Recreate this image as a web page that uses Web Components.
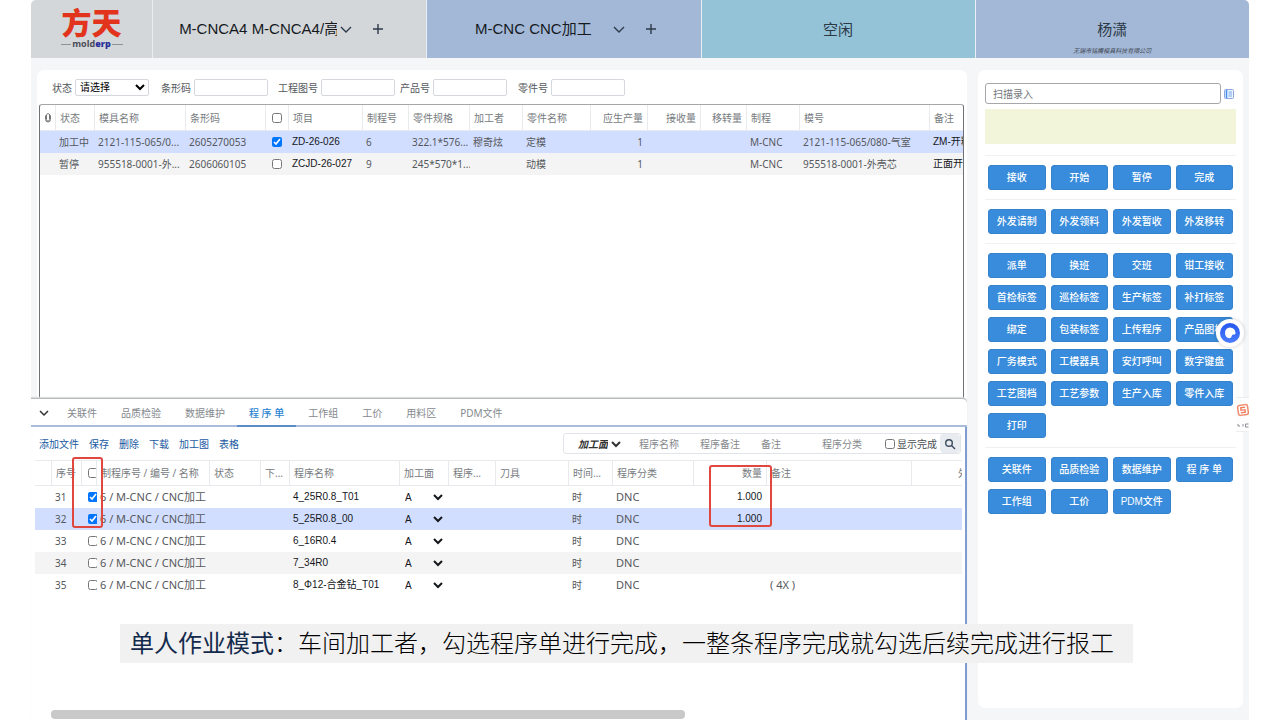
<!DOCTYPE html>
<html lang="zh-CN">
<head>
<meta charset="utf-8">
<meta name="viewport" content="width=device-width, initial-scale=1">
<title>方天 molderp</title>
<style>
  :root {
    --latin: "Noto Sans", "Noto Sans CJK SC", sans-serif;
    --arial: "Liberation Sans", "Noto Sans CJK SC", sans-serif;
    --line: #e8eaed;
    --selected: #d2deff;
    --blue: #388cdb;
  }
  body { margin: 0; background: #fff; font: 10px/14px var(--latin); color: #55585c; }
</style>
</head>
<body>
<mes-app></mes-app>

<script>
const clipIcon = '<svg width="8" height="11" viewBox="0 0 8 11"><path d="M5.5 3v4.5a1.500 1.500 0 0 1-3 0V3a1.500 1.500 0 0 1 2.500-1L6.500 3.500v4a2.500 2.500 0 0 1-5 0V3.500"/></svg>';
const jobs = {
  columns: [
    { title: clipIcon, w: 16, cls: 'clip' }, { title: '状态', w: 39 }, { title: '模具名称', w: 91 }, { title: '条形码', w: 80 },
    { type: 'check', w: 23, cls: 'check' }, { title: '项目', w: 74, cls: 'ink' }, { title: '制程号', w: 46 },
    { title: '零件规格', w: 61, cls: 'clip' }, { title: '加工者', w: 53 }, { title: '零件名称', w: 68 },
    { title: '应生产量', w: 57, cls: 'right' }, { title: '接收量', w: 53, cls: 'right' }, { title: '移转量', w: 46, cls: 'right' },
    { title: '制程', w: 53 }, { title: '模号', w: 130 }, { title: '备注', cls: 'ink clip' }
  ],
  rows: [
    { state: 'selected', cells: ['', '加工中', '2121-115-065/0...', '2605270053', true, 'ZD-26-026', '6', '322.1*576...', '穆奇炫', '定模', '1', '', '', 'M-CNC', '2121-115-065/080-气室', 'ZM-开粗'] },
    { state: 'alt', cells: ['', '暂停', '955518-0001-外...', '2606060105', false, 'ZCJD-26-027', '9', '245*570*1...', '', '动模', '1', '', '', 'M-CNC', '955518-0001-外壳芯', '正面开'] }
  ]
};

const step = (no, picked, file, amount, note, state) => ({
  state, cells: ['', no, picked, '6 / M-CNC / CNC加工', '', '', file, 'A', '', '', '时', 'DNC', amount, note, '']
});
const programs = {
  columns: [
    { title: '', w: 17 }, { title: '序号', w: 30, cls: 'clip' }, { type: 'check', w: 15, cls: 'check' },
    { title: '制程序号 / 编号 / 名称', w: 113, cls: 'clip wide' }, { title: '状态', w: 51 }, { title: '下...', w: 29, cls: 'clip' }, { title: '程序名称', w: 110, cls: 'ink' },
    { title: '加工面', w: 49, type: 'select', cls: 'ink' }, { title: '程序...', w: 47 }, { title: '刀具', w: 73 },
    { title: '时间...', w: 44 }, { title: '程序分类', w: 81, cls: 'wide' }, { title: '数量', w: 73, cls: 'ink right' },
    { title: '备注', w: 145, cls: 'wide' }, { title: '外', cls: 'edge' }
  ],
  rows: [
    step('31', true, '4_25R0.8_T01', '1.000', ''),
    step('32', true, '5_25R0.8_00', '1.000', '', 'selected'),
    step('33', false, '6_16R0.4', '', ''),
    step('34', false, '7_34R0', '', '', 'alt'),
    step('35', false, '8_Φ12-合金钻_T01', '', '( 4X )')
  ]
};
const sources = { jobs, programs };

const define = (name, css, html, setup) => {
  const template = document.createElement('template');
  template.innerHTML = `<style>*{box-sizing:border-box}${css}</style>${html}`;
  customElements.define(name, class extends HTMLElement {
    constructor() {
      super();
      this.attachShadow({ mode: 'open' }).append(template.content.cloneNode(true));
    }
    connectedCallback() {
      if (setup && !this.ready) { this.ready = true; setup(this, this.shadowRoot); }
    }
  });
};

define('brand-logo', `
  :host { display: flex; flex-direction: column; align-items: center; justify-content: center; background: #d3d7da; padding-bottom: 4px; }
  strong { font: 900 30px/34px "Noto Sans CJK SC", sans-serif; color: #e2341d; }
  small { display: flex; align-items: center; gap: 1px; width: 62px; font: 700 9px/12px "Open Sans", sans-serif; color: #4a4a55; }
  small::before, small::after { content: ""; flex: 1; height: 1px; background: #8d9298; }
  b { color: #2a2f9a; }
`, `<strong>方天</strong><small><span>mold<b>erp</b></span></small>`);

define('machine-tab', `
  :host { display: flex; align-items: center; justify-content: center; background: var(--tab, #d3d7da); padding-right: 16px;
          font: 15px/20px var(--arial); color: #15191e; min-width: 0; }
  .name { overflow: hidden; white-space: nowrap; max-width: 158px; }
  button { border: 0; padding: 0; background: none; display: flex; color: #2d3b4a; }
  svg { display: block; fill: none; stroke: currentColor; stroke-width: 1.4; }
  .plus { margin-left: 17px; }
  :host([spaced]) { padding: 0 0 0 4px; }
  :host([spaced]) .menu { margin-left: 18px; }
`, `<span class="name"><slot></slot></span>
  <button class="menu" aria-label="切换机台"><svg width="18" height="16"><path d="M4 6l5 5 5-5"/></svg></button>
  <button class="plus" aria-label="添加机台"><svg width="12" height="12"><path d="M6 1v10M1 6h10"/></svg></button>`);

define('status-tab', `
  :host { position: relative; display: flex; align-items: center; justify-content: center;
          background: var(--tab); font: 15px/20px var(--arial); color: #2b3946; padding-top: 2px; }
  ::slotted(small) { position: absolute; left: 0; right: 0; bottom: 3px; text-align: center;
          font: italic 6px/8px var(--arial); color: #3c4450; }
`, `<slot></slot>`);

define('mes-header', `
  :host { display: grid; grid-template-columns: 121px repeat(4, minmax(0, 1fr)); column-gap: 1px; height: 58px;
          background: #e9eef3; border-radius: 5px 5px 0 0; overflow: hidden; }
  .work { --tab: #a3b8d7; }
  .idle { --tab: #94c3d8; }
`, `<brand-logo></brand-logo>
  <machine-tab>M-CNCA4 M-CNCA4/高速机</machine-tab>
  <machine-tab class="work" spaced>M-CNC CNC加工</machine-tab>
  <status-tab class="idle">空闲</status-tab>
  <status-tab class="work">杨潇<small>无锡市铭腾模具科技有限公司</small></status-tab>`);

define('filter-bar', `
  :host { display: grid; grid-template-columns: 98px 119px 127px 112px 118px; margin: 9px 0 8px 14px; }
  label { display: flex; align-items: center; justify-content: flex-end; gap: 3px; }
  input, select { width: 74px; height: 17px; border: 1px solid #d5d9de; border-radius: 2px; background: #fff;
          font: 10px/14px var(--arial); color: #000; padding: 0 2px; }
  select { padding: 0; }
`, `<label>状态<select><option>请选择</option><option>加工中</option><option>暂停</option></select></label>
  <label>条形码<input></label><label>工程图号<input></label>
  <label>产品号<input></label><label>零件号<input></label>`);

/* Data grid: its source attribute names the set of columns and rows to show. */
define('data-grid', `
  :host { display: block; overflow: hidden; }
  table { width: 100%; table-layout: fixed; border-collapse: separate; border-spacing: 0; }
  th, td { padding: 0 3px; overflow: hidden; white-space: nowrap; text-overflow: ellipsis; text-align: left; }
  th { height: var(--head, 26px); font-weight: 400; padding: 0 4px; color: #777b80; border-right: 1px solid var(--line); border-bottom: 1px solid var(--line); }
  th:last-child { border-right: 0; }
  td { height: 22px; }
  td.wide { font-size: 11px; }
  tr.alt td { background: #f4f4f4; }
  tr.selected td { background: var(--selected); }
  .right { text-align: right; }
  td.right { padding-right: 5px; }
  td.ink, .ink select { font-family: var(--arial); color: #14171b; }
  .clip { text-overflow: clip; padding-right: 0; }
  .check { text-overflow: clip; padding: 0 0 0 6px; }
  .edge { padding-left: 46px; text-overflow: clip; }
  input { width: 10px; height: 10px; margin: 0; display: block; }
  .ink select { font-size: 10px; width: 45px; height: 18px; margin: 0 0 0 -2px; border: 0; background: none; padding: 0; display: block; }
  svg { display: block; fill: none; stroke: #777; }
`, `<table><colgroup></colgroup><thead><tr></tr></thead><tbody></tbody></table>`,
(host, root) => {
  const cell = (value, col) => {
    if (col.type === 'check') return `<input type="checkbox" aria-label="选择" ${value ? 'checked' : ''}>`;
    if (col.type === 'select' && value) return `<select aria-label="加工面"><option>${value}</option></select>`;
    return value ?? '';
  };
  const { columns, rows } = sources[host.getAttribute('source')];
  root.querySelector('colgroup').innerHTML = columns.map(c => `<col${c.w ? ` style="width:${c.w}px"` : ''}>`).join('');
  root.querySelector('thead tr').innerHTML = columns.map(c =>
    `<th class="${c.cls || ''}">${c.type === 'check' ? cell(false, c) : c.title}</th>`).join('');
  root.querySelector('tbody').innerHTML = rows.map(r =>
    `<tr class="${r.state || ''}">${columns.map((c, i) => `<td class="${c.cls || ''}">${cell(r.cells[i], c)}</td>`).join('')}</tr>`).join('');
});

define('job-list', `
  :host { display: flex; flex-direction: column; background: #fff; border-radius: 7px 7px 0 0; min-width: 0; }
  data-grid { flex: 1; margin: 0 3px 0 2px; border: 1px solid #6f7174; border-top-color: #a4a6a8; border-bottom: 0; border-radius: 3px 3px 0 0; }
`, `<filter-bar></filter-bar><data-grid source="jobs"></data-grid>`);

define('panel-tabs', `
  :host { display: flex; height: 28px; border-bottom: 2px solid #a9bcdc; padding-left: 4px; }
  button { border: 0; background: none; padding: 0 12px; margin-bottom: -2px; font: inherit; color: #85898e; white-space: nowrap; }
  button.fold { padding: 0 4px; margin-right: 2px; color: #333; }
  .on { color: #2a84d2; font-weight: 500; border-bottom: 2px solid #5a8cc8; padding: 2px 12px 0; }
  svg { display: block; fill: none; stroke: currentColor; stroke-width: 1.5; }
`, `<button class="fold" aria-label="收起"><svg width="10" height="10"><path d="M1 3l4 4 4-4"/></svg></button>
  <button>关联件</button><button>品质检验</button><button>数据维护</button><button class="on">程 序 单</button>
  <button>工作组</button><button>工价</button><button>用料区</button><button>PDM文件</button>`);

define('program-toolbar', `
  :host { display: flex; align-items: center; justify-content: space-between; height: 33px; padding: 0 4px 0 8px; }
  nav { display: flex; gap: 10px; }
  nav button { border: 0; background: none; padding: 0; font: inherit; color: #19599f; }
  form { display: flex; align-items: center; height: 21px; border: 1px solid #e1e4e8; border-radius: 3px; }
  select { width: 50px; margin: 0 11px 0 10px; border: 0; background: none; font: italic 700 10px/14px var(--latin); color: #333; padding: 0; }
  .text { width: 61px; border: 0; background: none; padding: 0 4px; font: inherit; }
  .text::placeholder { color: #85888d; opacity: 1; }
  label { display: flex; align-items: center; gap: 2px; margin-left: 6px; color: #4b4e52; }
  label input { width: 10px; height: 10px; margin: 0; }
  .find { display: flex; align-items: center; justify-content: center; width: 20px; height: 19px; margin-left: 3px; border: 0; border-radius: 4px; background: #e8ebef; padding: 0; }
  svg { fill: none; stroke: #3c4c5e; stroke-width: 1.4; }
`, `<nav><button>添加文件</button><button>保存</button><button>删除</button><button>下载</button><button>加工图</button><button>表格</button></nav>
  <form><select aria-label="加工面"><option>加工面</option></select>
    <input class="text" placeholder="程序名称" aria-label="程序名称"><input class="text" placeholder="程序备注" aria-label="程序备注">
    <input class="text" placeholder="备注" aria-label="备注"><input class="text" placeholder="程序分类" aria-label="程序分类">
    <label><input type="checkbox">显示完成</label>
    <button class="find" type="button" aria-label="搜索"><svg width="12" height="12"><circle cx="5" cy="5" r="3.300"/><path d="M7.500 7.500l3.500 3.500"/></svg></button></form>`);

define('program-panel', `
  :host { display: flex; flex-direction: column; background: #fff; border-top: 1px solid #b9bbbd; border-radius: 0 5px 0 0;
          box-shadow: 0 -1px 1px #d8dadc; min-width: 0; position: relative; }
  .body { flex: 1; display: flex; flex-direction: column; border-right: 2px solid #7f9dd0; }
  .sheet { position: relative; margin: 0 3px 0 4px; border-top: 1px solid var(--line); --head: 25px; }
  .mark { position: absolute; border: 2px solid #e0483f; border-radius: 3px; pointer-events: none; }
  .picked { left: 37px; top: -4px; width: 31px; height: 71px; }
  .amount { left: 674px; top: 4px; width: 63px; height: 62px; }
  .scroll { margin: auto 30% 1px 20px; height: 9px; border-radius: 4px; background: #c9c9c9; }
`, `<panel-tabs></panel-tabs>
  <div class="body"><program-toolbar></program-toolbar>
    <div class="sheet"><data-grid source="programs"></data-grid><div class="mark picked"></div><div class="mark amount"></div></div>
    <div class="scroll"></div></div>`);

define('action-group', `
  :host { display: grid; grid-template-columns: repeat(4, minmax(0, 1fr)); gap: 7px 5px; padding: 9px 3px; border-top: 1px solid #eef0f3; }
  button { height: 25px; padding: 0; border: 1px solid #3583cd; border-radius: 3px; background: var(--blue); color: #fff;
           font: 500 10px/14px var(--arial); white-space: nowrap; }
`, ``, (host, root) => {
  for (const text of host.getAttribute('actions').split(',')) {
    const button = document.createElement('button');
    button.textContent = text;
    root.append(button);
  }
});

define('action-panel', `
  :host { display: block; background: #fff; border-radius: 7px; padding: 13px 7px 0; }
  .scan { display: flex; align-items: center; gap: 3px; padding-right: 2px; }
  input { flex: 1; min-width: 0; height: 21px; border: 1px solid #a5a7aa; border-radius: 3px; padding: 0 7px; font: inherit; }
  input::placeholder { color: #75787c; opacity: 1; }
  .scan button { border: 0; background: none; padding: 0; display: flex; }
  output { display: block; height: 35px; margin: 5px 0 11px; background: #f2f5d9; }
`, `<div class="scan"><input placeholder="扫描录入" aria-label="扫描录入">
    <button aria-label="列表"><svg width="10" height="10" fill="none"><rect x=".5" y=".5" width="9" height="9" rx="1" stroke="#8ba6dc" fill="#eef4ff"/><path d="M2.500 1v8" stroke="#3f8ef0" stroke-width="1.500"/><path d="M4.500 3h3.500M4.500 5h3.500M4.500 7h3.500" stroke="#77a8e6"/></svg></button></div>
  <output></output>
  <action-group actions="接收,开始,暂停,完成"></action-group>
  <action-group actions="外发请制,外发领料,外发暂收,外发移转"></action-group>
  <action-group actions="派单,换班,交班,钳工接收,首检标签,巡检标签,生产标签,补打标签,绑定,包装标签,上传程序,产品图档,厂务模式,工模器具,安灯呼叫,数字键盘,工艺图档,工艺参数,生产入库,零件入库,打印"></action-group>
  <action-group actions="关联件,品质检验,数据维护,程 序 单,工作组,工价,PDM文件"></action-group>`);

define('assistant-button', `
  :host { position: absolute; right: 36px; top: 319px; }
  button { width: 28px; height: 28px; padding: 0; border: 0; border-radius: 50%; background: #fff; box-shadow: 0 0 4px #0003; display: flex; align-items: center; justify-content: center; }
`, `<button aria-label="助手"><svg width="20" height="20"><defs><linearGradient id="g" x2="0" y2="1"><stop stop-color="#2458ee"/><stop offset="1" stop-color="#4b7dff"/></linearGradient></defs>
  <circle cx="10" cy="10" r="10" fill="url(#g)"/><path d="M10 4.500a5.500 5.500 0 0 1 5.500 5.500c0 1-.5 1.500-1.500 1.500-1.500 0-2 .5-2.500 2-.3 1-1 1.700-2 1.700A5.400 5.400 0 0 1 10 4.500z" fill="#fff"/></svg></button>`);

define('ime-badge', `
  :host { position: absolute; right: 31px; top: 397px; width: 13px; height: 35px; background: #fdfdfe; overflow: hidden; border-top: 1px solid #eee; border-bottom: 1px solid #eee; }
  svg { display: block; }
`, `<svg width="13" height="33" fill="none"><g transform="rotate(-8 7 12)"><rect x="2" y="7" width="10" height="10" rx="2" stroke="#f08a6c" stroke-width="1.500"/><path d="M9.500 9.500H5v2.500h4v2.500H4.500" stroke="#ee7a5a" stroke-width="1.300"/></g><path d="M2 26v2h2M7 26v2.500M12.500 26h-3v3h3" stroke="#8b8f94"/></svg>`);

define('caption-bar', `
  :host { position: absolute; left: 120px; bottom: 57px; height: 39px; padding: 0 19px 0 10px; background: #f1f1f1;
          font: 300 24px/36px "Noto Sans CJK SC", sans-serif; color: #000; white-space: nowrap; }
  b { font-weight: 400; color: #142a4c; }
`, `<b><slot name="lead"></slot></b><slot></slot>`);

define('mes-app', `
  :host { position: relative; display: flex; flex-direction: column; min-height: 100vh; padding: 0 31px; overflow: hidden; }
  main { flex: 1; display: grid; grid-template-columns: minmax(0, 1fr) 265px; column-gap: 11px; padding: 12px 6px 0 0; background: #f4f6f8; }
  .work { display: grid; grid-template-rows: 328fr 322fr; min-width: 0; }
  job-list { margin-left: 6px; }
  action-panel { margin-bottom: 12px; }
`, `<mes-header></mes-header>
  <main><div class="work"><job-list></job-list><program-panel></program-panel></div><action-panel></action-panel></main>
  <assistant-button></assistant-button><ime-badge></ime-badge>
  <caption-bar><span slot="lead">单人作业模式</span>：车间加工者，勾选程序单进行完成，一整条程序完成就勾选后续完成进行报工</caption-bar>`);
</script>
</body>
</html>
